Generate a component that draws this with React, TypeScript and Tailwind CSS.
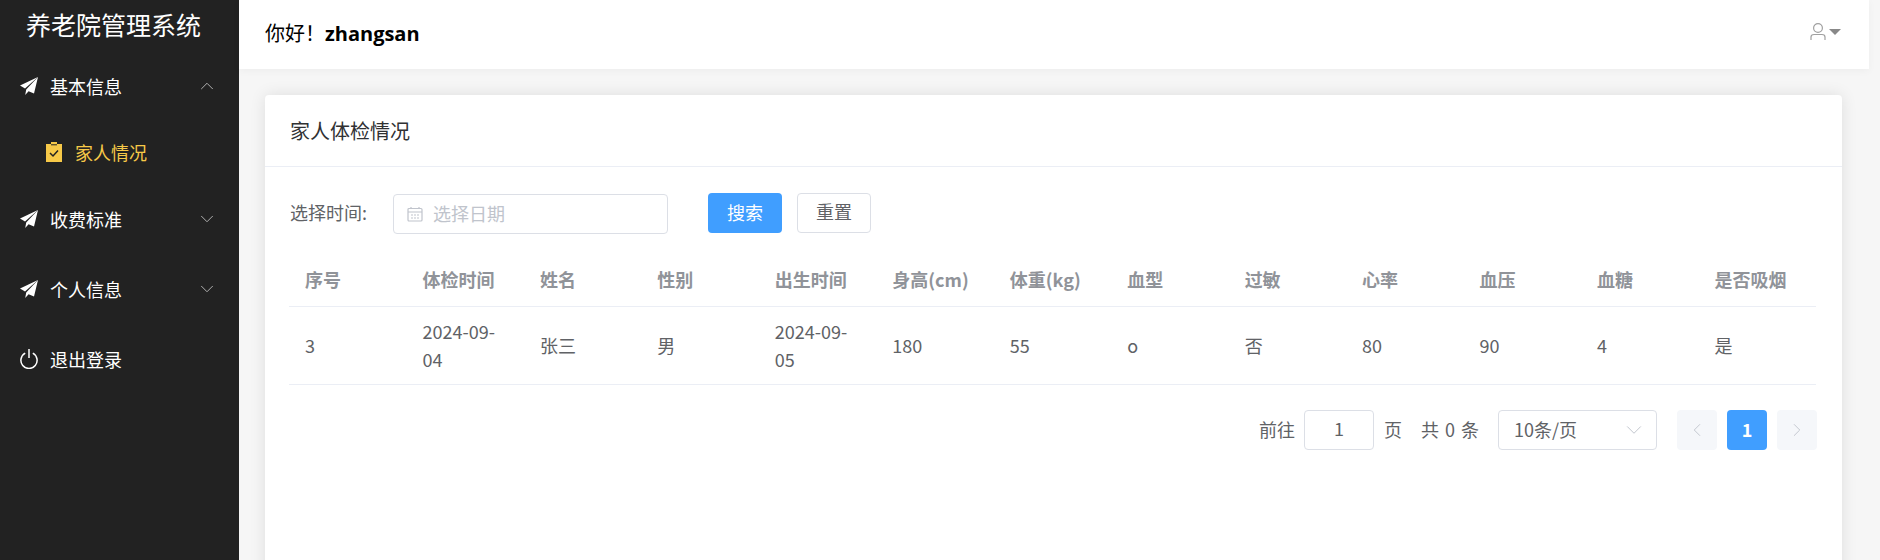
import { ChevronDown, ChevronLeft, ChevronRight, ChevronUp } from "lucide-react";

const cjk = `"Noto Sans CJK SC", "Liberation Sans", sans-serif`;

const PlaneIcon = () => (
  <svg width="18" height="18" viewBox="0 0 18 18" fill="white" className="shrink-0">
    <path d="M18 0 L0 8.6 L5 11.6 L18 0 Z" />
    <path d="M18 0 L6.2 12.4 L5.2 18 L8.6 14.2 L14 16.4 L18 0 Z" />
  </svg>
);

const PowerIcon = () => (
  <svg width="18" height="20" viewBox="0 0 18 20" fill="none" stroke="white" strokeWidth="1.5" className="shrink-0">
    <path d="M5.2 4.2 A8.1 8.1 0 1 0 12.8 4.2" />
    <path d="M9 0 V9" />
  </svg>
);

const ClipboardIcon = () => (
  <svg width="16" height="20" viewBox="0 0 16 20" className="shrink-0">
    <path d="M5 0 H11 V2 H16 V20 H0 V2 H5 Z" fill="#f7c948" />
    <path d="M5 2.8 H11" stroke="#222222" strokeWidth="1" />
    <path d="M4 11 L7 14 L12 8.5" fill="none" stroke="#222222" strokeWidth="1.5" />
  </svg>
);

const CalendarIcon = () => (
  <svg width="16" height="16" viewBox="0 0 16 16" fill="none" stroke="#c0c4cc" strokeWidth="1.2" className="shrink-0">
    <rect x="1" y="2.5" width="14" height="12.5" rx="1" />
    <path d="M1 6 H15 M4 1 V3 M12 1 V3 M4 9 H6 M7 9 H9 M10 9 H12 M4 12 H6 M7 12 H9 M10 12 H12" />
  </svg>
);

const UserIcon = () => (
  <svg width="16" height="17" viewBox="0 0 16 17" fill="none" stroke="#a0a0a0" strokeWidth="1.2">
    <circle cx="8" cy="5" r="4.4" />
    <path d="M1 17 V14 Q1 11.5 4 11.5 H12 Q15 11.5 15 14 V17" />
  </svg>
);

const MenuRow = ({ label, open }: { label: string; open?: boolean }) => (
  <div className="flex h-[70px] items-center pl-5 pr-[21px] text-[18px] text-white">
    <PlaneIcon />
    <span className="ml-[12px] flex-1">{label}</span>
    {open ? (
      <ChevronUp size={22} strokeWidth={1} color="#bbbbbb" />
    ) : (
      <ChevronDown size={22} strokeWidth={1} color="#bbbbbb" />
    )}
  </div>
);

const Sidebar = () => (
  <aside className="flex w-[239px] shrink-0 flex-col bg-[#222222]">
    <div className="flex h-[49px] items-center pl-[26px] text-[25px] leading-none text-white">
      养老院管理系统
    </div>
    <div className="mt-[2px]">
      <MenuRow label="基本信息" open />
    </div>
    <div className="flex h-[62px] items-center pl-[46px] text-[18px] text-[#f7c948]">
      <ClipboardIcon />
      <span className="ml-[13px]">家人情况</span>
    </div>
    <div className="mt-[1px]">
      <MenuRow label="收费标准" />
    </div>
    <MenuRow label="个人信息" />
    <div className="flex h-[70px] items-center pl-5 text-[18px] text-white">
      <PowerIcon />
      <span className="ml-[12px]">退出登录</span>
    </div>
  </aside>
);

const columns = ["序号", "体检时间", "姓名", "性别", "出生时间", "身高(cm)", "体重(kg)", "血型", "过敏", "心率", "血压", "血糖", "是否吸烟"];
const row = ["3", "2024-09-04", "张三", "男", "2024-09-05", "180", "55", "o", "否", "80", "90", "4", "是"];

const Filter = () => (
  <div className="mt-[26px] flex h-[41px] items-start px-[25px] text-[18px] text-[#606266]">
    <span className="w-[103px] leading-[38px]">选择时间:</span>
    <div className="mt-px flex h-10 w-[275px] items-center rounded border border-[#dcdfe6] pb-px pl-[13px] text-[#c0c4cc]">
      <CalendarIcon />
      <span className="ml-[10px]">选择日期</span>
    </div>
    <button className="ml-[40px] h-10 w-[74px] rounded bg-[#409eff] pb-[2px] text-white">搜索</button>
    <button className="ml-[15px] h-10 w-[74px] rounded border border-[#dcdfe6] bg-white pb-[3px]">重置</button>
  </div>
);

const DataTable = () => (
  <div className="ml-[24px] mr-[26px] mt-[19px]">
    <table className="w-full table-fixed border-collapse text-[18px] leading-[28px]">
      <thead>
        <tr className="h-[53px] border-b border-[#ebeef5] text-left text-[#909399]">
          {columns.map((c) => (
            <th key={c} className="px-4 font-bold whitespace-nowrap">{c}</th>
          ))}
        </tr>
      </thead>
      <tbody>
        <tr className="h-[78px] border-b border-[#ebeef5] text-[#606266]">
          {row.map((v, i) => (
            <td key={i} className="px-4">{v}</td>
          ))}
        </tr>
      </tbody>
    </table>
  </div>
);

const Pagination = () => (
  <div className="mr-[25px] mt-[25px] flex h-10 items-center justify-end text-[18px] text-[#606266]">
    <span>前往</span>
    <div className="ml-[9px] flex h-10 w-[70px] items-center justify-center rounded border border-[#dcdfe6] pb-[2px]">1</div>
    <span className="ml-[10px]">页</span>
    <span className="ml-[19px] [word-spacing:2px]">共 0 条</span>
    <div className="ml-[19px] flex h-10 w-[159px] items-center justify-between rounded border border-[#dcdfe6] pl-[15px] pr-[9px]">
      <span>10条/页</span>
      <ChevronDown size={26} strokeWidth={0.9} color="#c0c4cc" />
    </div>
    <div className="ml-5 flex h-10 w-10 items-center justify-center rounded-sm bg-[#f5f7fa] text-[#c0c4cc]">
      <ChevronLeft size={22} strokeWidth={1} />
    </div>
    <div className="ml-[10px] flex h-10 w-10 items-center justify-center rounded-sm bg-[#409eff] font-bold text-white">1</div>
    <div className="ml-[10px] flex h-10 w-10 items-center justify-center rounded-sm bg-[#f5f7fa] text-[#c0c4cc]">
      <ChevronRight size={22} strokeWidth={1} />
    </div>
  </div>
);

export default function App() {
  return (
    <div className="flex h-[560px] overflow-hidden bg-[#f6f6f6]" style={{ fontFamily: cjk }}>
      <Sidebar />
      <div className="flex flex-1 flex-col pr-[11px]">
        <header className="flex h-[69px] shrink-0 items-center justify-between bg-white pb-[3px] pl-[26px] pr-[28px] text-[20px] text-black shadow-[0_2px_8px_0_rgba(0,0,0,0.04)]">
          <div>
            你好！<span className="font-bold" style={{ fontFamily: `"Open Sans", sans-serif` }}>zhangsan</span>
          </div>
          <div className="flex items-center gap-[3px] pb-[3px]">
            <UserIcon />
            <span className="h-0 w-0 border-x-[6px] border-t-[6px] border-x-transparent border-t-[#888888]" />
          </div>
        </header>
        <main className="flex-1 pl-[26px] pr-[27px] pt-[26px]">
          <div className="h-[600px] rounded bg-white shadow-[0_0_16px_0_rgba(0,0,0,0.1)]">
            <div className="flex h-[72px] items-center border-b border-[#ebeef5] px-[25px] text-[20px] text-[#303133]">
              家人体检情况
            </div>
            <Filter />
            <DataTable />
            <Pagination />
          </div>
        </main>
      </div>
    </div>
  );
}
